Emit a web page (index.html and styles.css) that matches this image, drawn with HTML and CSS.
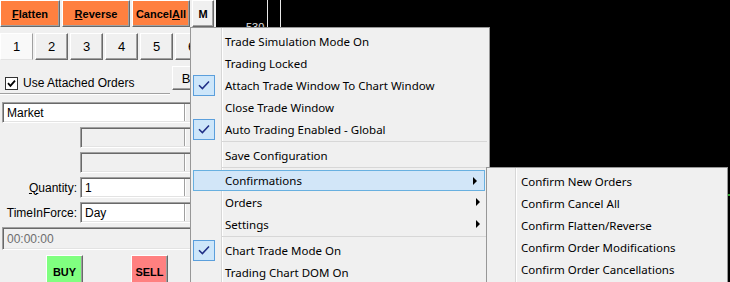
FILE: index.html
```html
<!DOCTYPE html>
<html>
<head>
	<title>Trade Window</title>
	<link rel="stylesheet" href="styles.css">
</head>
<body>
<div class="app">
	<div class="panel">
		<div class="toolbar">
			<button class="tb orange w60"><u>F</u>latten</button>
			<button class="tb orange w68"><u>R</u>everse</button>
			<button class="tb orange w58">Cancel<u>A</u>ll</button>
			<button class="tb plain w22">M</button>
		</div>
		<div class="tabs">
			<div class="tab active">1</div>
			<div class="tab">2</div>
			<div class="tab">3</div>
			<div class="tab">4</div>
			<div class="tab">5</div>
			<div class="tab">6</div>
		</div>
		<div class="attach-row">
			<label class="check-label"><span class="checkbox"><svg width="9" height="9" viewBox="0 0 9 9"><path d="M1 4.2 L3.4 6.8 L8 1.6" fill="none" stroke="#000" stroke-width="1.8"/></svg></span>Use Attached Orders</label>
			<div class="btn-b">B</div>
		</div>
		<div class="rule"></div>
		<div class="form">
			<div class="field wide">Market<span class="drop"></span></div>
			<div class="form-row"><span class="lbl"></span><div class="field disabled"><span class="drop"></span></div></div>
			<div class="form-row"><span class="lbl"></span><div class="field disabled"><span class="drop"></span></div></div>
			<div class="form-row"><span class="lbl"><u>Q</u>uantity:</span><div class="field">1<span class="drop"></span></div></div>
			<div class="form-row"><span class="lbl">TimeInForce:</span><div class="field">Day<span class="drop"></span></div></div>
			<div class="field wide time">00:00:00</div>
		</div>
		<div class="actions">
			<div class="act buy">BUY</div>
			<div class="act sell">SELL</div>
		</div>
	</div>
	<div class="chart">
		<span class="price">530</span>
		<span class="vline l1"></span>
		<span class="vline l2"></span>
		<span class="tick"></span>
	</div>

	<div class="menu main-menu">
		<div class="mi"><span class="ico"></span>Trade Simulation Mode On</div>
		<div class="mi"><span class="ico"></span>Trading Locked</div>
		<div class="mi checked"><span class="ico"><svg width="12" height="10" viewBox="0 0 12 10"><path d="M1 5.2 L4.4 8.6 L11 1.4" fill="none" stroke="#1f2f86" stroke-width="1.5"/></svg></span>Attach Trade Window To Chart Window</div>
		<div class="mi"><span class="ico"></span>Close Trade Window</div>
		<div class="mi checked"><span class="ico"><svg width="12" height="10" viewBox="0 0 12 10"><path d="M1 5.2 L4.4 8.6 L11 1.4" fill="none" stroke="#1f2f86" stroke-width="1.5"/></svg></span>Auto Trading Enabled - Global</div>
		<div class="sep"></div>
		<div class="mi"><span class="ico"></span>Save Configuration</div>
		<div class="sep"></div>
		<div class="mi hot"><span class="ico"></span>Confirmations<span class="arrow"></span></div>
		<div class="mi"><span class="ico"></span>Orders<span class="arrow"></span></div>
		<div class="mi"><span class="ico"></span>Settings<span class="arrow"></span></div>
		<div class="sep"></div>
		<div class="mi checked"><span class="ico"><svg width="12" height="10" viewBox="0 0 12 10"><path d="M1 5.2 L4.4 8.6 L11 1.4" fill="none" stroke="#1f2f86" stroke-width="1.5"/></svg></span>Chart Trade Mode On</div>
		<div class="mi"><span class="ico"></span>Trading Chart DOM On</div>
	</div>

	<div class="menu sub-menu">
		<div class="mi">Confirm New Orders</div>
		<div class="mi">Confirm Cancel All</div>
		<div class="mi">Confirm Flatten/Reverse</div>
		<div class="mi">Confirm Order Modifications</div>
		<div class="mi">Confirm Order Cancellations</div>
	</div>
</div>
</body>
</html>
```

FILE: styles.css
```css
html, body {
	margin: 0;
	padding: 0;
	overflow: hidden;
}
body {
	width: 730px;
	height: 282px;
	background-color: #000;
	font-family: "Liberation Sans", Arial, sans-serif;
	font-size: 12px;
	color: #000;
}
.app {
	display: flex;
	height: 282px;
	position: relative;
	overflow: hidden;
}

/* left trade panel */
.panel {
	width: 216px;
	flex: none;
	background-color: #f0f0f0;
	overflow: hidden;
}
.toolbar {
	display: flex;
	gap: 2px;
	height: 27px;
}
.tb {
	height: 27px;
	padding: 0;
	font-family: "Liberation Sans", Arial, sans-serif;
	font-size: 11px;
	font-weight: bold;
	color: #000;
	border: 1px solid;
	border-color: #fff #696969 #696969 #fff;
	box-shadow: inset -1px -1px 0 #a0a0a0;
}
.orange {
	background-color: #ff8040;
}
.plain {
	background-color: #f0f0f0;
}
.w60 { width: 60px; }
.w68 { width: 68px; }
.w58 { width: 58px; }
.w22 { width: 22px; }

.tabs {
	display: flex;
	gap: 2px;
	margin-top: 6px;
	height: 27px;
}
.tab {
	width: 33px;
	flex: none;
	box-sizing: border-box;
	display: flex;
	align-items: center;
	justify-content: center;
	font-size: 13px;
	border: 1px solid;
	border-color: #fff #696969 #696969 #fff;
	box-shadow: inset -1px -1px 0 #a0a0a0;
}
.tab.active {
	background-color: #f9f9f9;
	border-color: #fff #a0a0a0 #e3e3e3 #fff;
	box-shadow: none;
}

.attach-row {
	display: flex;
	margin-top: 6px;
	height: 27px;
}
.check-label {
	display: flex;
	align-items: center;
	margin: 10px 0 0 5px;
	height: 14px;
	font-size: 12px;
}
.checkbox {
	width: 13px;
	height: 13px;
	box-sizing: border-box;
	margin-right: 5px;
	display: flex;
	align-items: center;
	justify-content: center;
	background-color: #fff;
	border: 1px solid #333;
}
.btn-b {
	margin-left: auto;
	margin-right: 16px;
	width: 28px;
	height: 24px;
	box-sizing: border-box;
	display: flex;
	align-items: center;
	justify-content: center;
	font-size: 13px;
	background-color: #f0f0f0;
	border: 1px solid;
	border-color: #fff #696969 #696969 #fff;
	box-shadow: inset -1px -1px 0 #a0a0a0;
}
.rule {
	height: 0;
	margin-right: 46px;
	border-top: 1px solid #a0a0a0;
	border-bottom: 1px solid #fff;
}

.form {
	display: flex;
	flex-direction: column;
	gap: 4px;
	margin-top: 7px;
}
.form-row {
	display: flex;
	align-items: center;
}
.lbl {
	width: 80px;
	flex: none;
	box-sizing: border-box;
	padding-right: 3px;
	text-align: right;
	font-size: 12px;
}
.field {
	position: relative;
	width: 125px;
	height: 21px;
	box-sizing: border-box;
	padding: 2px 0 0 4px;
	background-color: #fff;
	border: 1px solid;
	border-color: #a0a0a0 #fff #fff #a0a0a0;
	box-shadow: inset 1px 1px 0 #696969, inset -1px -1px 0 #e3e3e3;
	font-size: 12px;
	line-height: 16px;
}
.field.wide {
	width: 203px;
	margin-left: 2px;
}
.field.disabled {
	background-color: #f0f0f0;
}
.field.time {
	height: 23px;
	padding-top: 3px;
	background-color: #f0f0f0;
	color: #6d6d6d;
}
.drop {
	position: absolute;
	top: 1px;
	right: 1px;
	width: 17px;
	height: 17px;
	background-color: #f0f0f0;
	border-left: 1px solid #fff;
	box-shadow: -1px 0 0 #a0a0a0;
}
.actions {
	display: flex;
	margin: 5px 0 0 46px;
	gap: 48px;
}
.act {
	width: 37px;
	height: 34px;
	box-sizing: border-box;
	display: flex;
	align-items: center;
	justify-content: center;
	font-weight: bold;
	font-size: 11px;
	border: 1px solid;
	border-color: #fff #696969 #696969 #fff;
	box-shadow: inset -1px -1px 0 #a0a0a0;
}
.buy { background-color: #80ff80; }
.sell { background-color: #ff8080; }

/* chart */
.chart {
	flex: 1;
	position: relative;
	background-color: #000;
}
.price {
	position: absolute;
	left: 30px;
	top: 21px;
	color: #e0e0e0;
	font-size: 11px;
}
.vline {
	position: absolute;
	top: 0;
	width: 1px;
	height: 40px;
	background-color: #e8e8e8;
}
.l1 { left: 51px; }
.l2 { left: 64px; }
.tick {
	position: absolute;
	right: 0;
	top: 194px;
	width: 3px;
	height: 2px;
	background-color: #2ea02e;
}

/* popup menus */
.menu {
	position: absolute;
	box-sizing: border-box;
	padding: 2px;
	background-color: #f0f0f0;
	border: 1px solid #979797;
	font-family: "Noto Sans", "Open Sans", sans-serif;
	font-size: 11.5px;
	color: #000;
}
.main-menu {
	left: 190px;
	top: 27px;
	width: 300px;
	height: 262px;
	background-image: linear-gradient(to right, transparent 30px, #d7d7d7 30px, #d7d7d7 31px, #fff 31px, #fff 32px, transparent 32px);
}
.sub-menu {
	left: 486px;
	top: 167px;
	width: 242px;
	height: 118px;
	padding-left: 34px;
	background-image: linear-gradient(to right, transparent 28px, #d7d7d7 28px, #d7d7d7 29px, #fff 29px, #fff 30px, transparent 30px);
}
.mi {
	display: flex;
	align-items: center;
	height: 22px;
	box-sizing: border-box;
	white-space: nowrap;
}
.ico {
	width: 22px;
	height: 21px;
	flex: none;
	box-sizing: border-box;
	margin-right: 10px;
	display: flex;
	align-items: center;
	justify-content: center;
}
.mi.checked .ico {
	background-color: #cde6fa;
	border: 1px solid #5b9fdc;
}
.mi.hot {
	height: 21px;
	margin-right: 2px;
	background-color: #d2e6f8;
	border: 1px solid #68b0e0;
}
.mi.hot .ico {
	margin-left: -1px;
}
.arrow {
	margin-left: auto;
	margin-right: 7px;
	width: 0;
	height: 0;
	border-left: 4px solid #000;
	border-top: 4px solid transparent;
	border-bottom: 4px solid transparent;
}
.sep {
	height: 0;
	margin: 1px 0 2px 28px;
	border-top: 1px solid #d7d7d7;
}
```
